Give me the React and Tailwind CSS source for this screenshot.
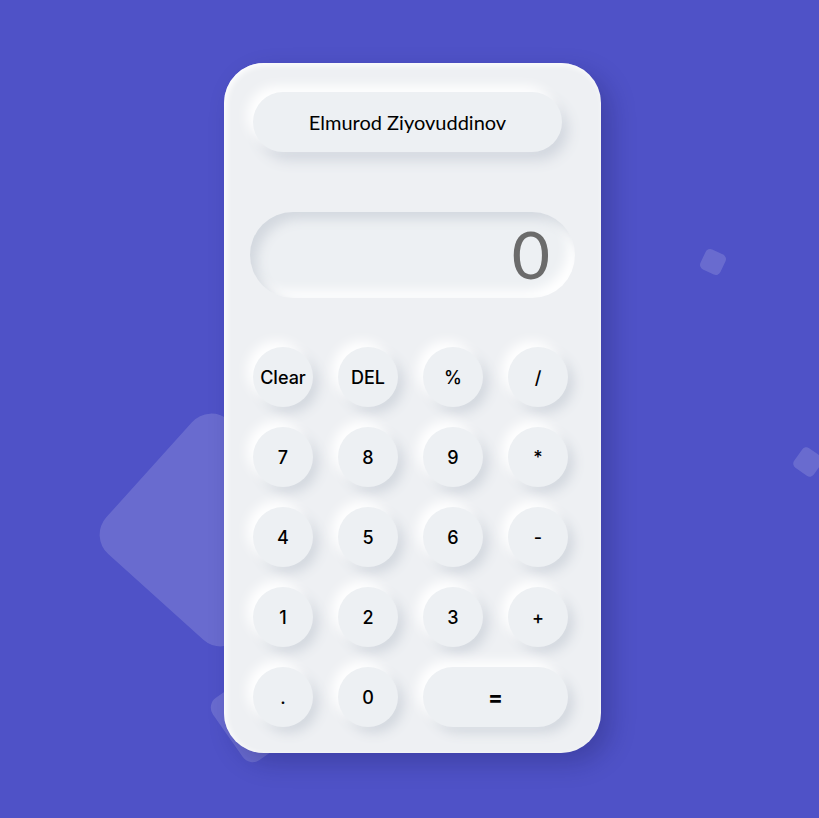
const keys = [
  ['Clear', 'DEL', '%', '/'],
  ['7', '8', '9', '*'],
  ['4', '5', '6', '-'],
  ['1', '2', '3', '+'],
];

function Key({ label, wide }) {
  return (
    <button
      className={`${wide ? 'col-span-2 rounded-full text-[22px] font-bold' : 'rounded-full text-[18px] font-medium'} h-[60px] bg-[#edf0f3] text-black font-['Inter',Arial,sans-serif] shadow-[-6px_-6px_12px_#ffffff,6px_6px_12px_#d3d8df] flex items-center justify-center`}
    >
      {label}
    </button>
  );
}

export default function App() {
  return (
    <div className="relative min-h-screen w-full overflow-hidden bg-[#4f52c7]">
      {/* floating shapes */}
      <div className="absolute left-[126px] top-[440px] h-[180px] w-[180px] rotate-[42deg] rounded-[26px] bg-white/15" />
      <div className="absolute left-[221px] top-[676px] h-[76px] w-[76px] rotate-[55deg] rounded-[12px] bg-white/15" />
      <div className="absolute left-[702px] top-[251px] h-[22px] w-[22px] rotate-[25deg] rounded-[5px] bg-white/15" />
      <div className="absolute left-[796px] top-[450px] h-[24px] w-[24px] rotate-[35deg] rounded-[5px] bg-white/15" />

      <div className="flex justify-center pl-[6px] pt-[63px]">
        <div className="relative z-10 flex h-[690px] w-[377px] flex-col rounded-[40px] bg-[#eef0f3] px-[26px] pb-[26px] pt-[29px] shadow-[inset_2px_2px_6px_#ffffff,10px_10px_24px_rgba(20,20,70,0.25)]">
          <div className="ml-[3px] flex h-[60px] w-[309px] items-center justify-center rounded-full bg-[#edf0f3] text-[20px] text-black font-['Lato',sans-serif] shadow-[-6px_-6px_12px_#ffffff,6px_8px_14px_#d1d6de]">
            Elmurod Ziyovuddinov
          </div>

          <div className="mt-[60px] flex h-[86px] items-center justify-end rounded-full bg-[#edf0f3] pr-[25px] pb-[2px] shadow-[inset_7px_7px_12px_#d3d8df,inset_-7px_-7px_12px_#ffffff]">
            <span className="text-[66px] font-normal leading-none text-[#6b6b6b] font-['Lato',sans-serif]">0</span>
          </div>

          <div className="mt-[49px] ml-[3px] grid grid-cols-[repeat(4,60px)] gap-x-[25px] gap-y-[20px]">
            {keys.flat().map((k) => (
              <Key key={k} label={k} />
            ))}
            <Key label="." />
            <Key label="0" />
            <Key label="=" wide />
          </div>
        </div>
      </div>
    </div>
  );
}
